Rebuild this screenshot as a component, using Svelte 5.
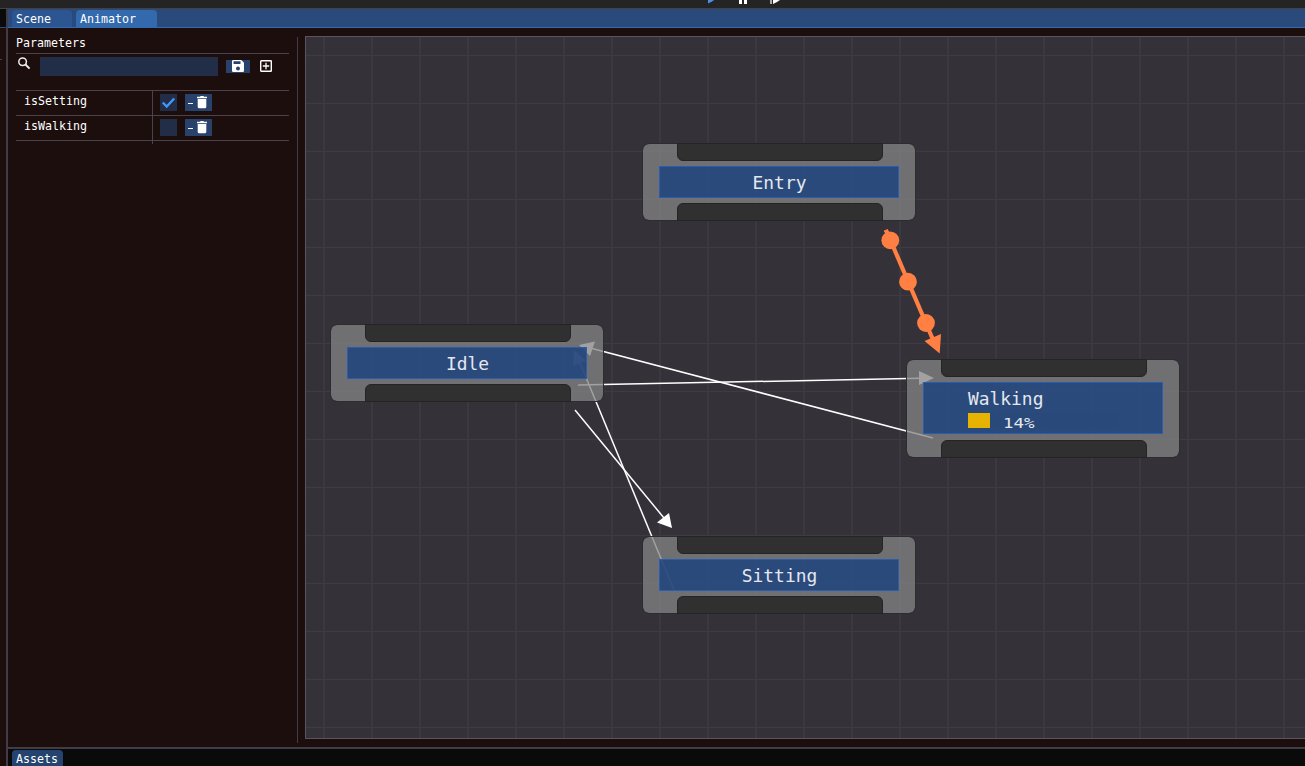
<script>
  const params = [
    { name: 'isSetting', on: true },
    { name: 'isWalking', on: false }
  ];
  const nodes = [
    { title: 'Entry', x: 336, y: 106, h: 78 },
    { title: 'Idle', x: 24, y: 287, h: 78 },
    { title: 'Walking', x: 600, y: 322, h: 99, progress: 14 },
    { title: 'Sitting', x: 336, y: 499, h: 78 }
  ];
  const links = [
    { line: [933, 438, 592, 348.5], head: '579,345 595,341.5 590,356' },
    { line: [578, 385, 920, 378.3], head: '934,378 919,371 919,385' },
    { line: [575, 410, 664, 518], head: '672,528 657,522.5 669,513' },
    { line: [674, 590, 580, 363], head: '574,350 573,366 586,361' }
  ];
  const beads = [[890.3, 240.3], [908, 281.7], [926, 323]];
  const cols = Array.from({ length: 21 }, (_, i) => 324 + i * 48);
  const rows = Array.from({ length: 15 }, (_, i) => 55.5 + i * 48);
</script>

<div class="app">
  <div class="toolbar">
    <svg width="80" height="8" viewBox="0 0 80 8">
      <path d="M0 -8L9 -2L4 1.5L0 3.5Z" fill="#4a90ec" />
      <path d="M31 -8h3v12h-3zM36 -8h3v12h-3z" fill="#fff" />
      <path d="M62 -8h2v12h-2z" fill="#aaa" />
      <path d="M65 -8L75 -2L69 2L65 4Z" fill="#fff" />
    </svg>
  </div>
  <div class="workspace">
    <div class="edge"><div class="edge-top"></div><div class="edge-rule"></div></div>
    <div class="dock">
      <div class="tabs">
        <div class="tab scene">Scene</div>
        <div class="tab active">Animator</div>
      </div>
      <div class="panes">
        <div class="side">
          <div class="heading">Parameters</div>
          <div class="search">
            <svg class="glass" width="14" height="14" viewBox="0 0 14 14" fill="none" stroke="#eee">
              <circle cx="5.6" cy="4.7" r="3.8" stroke-width="1.5" />
              <path d="M8.2 7.3L12.6 11.6" stroke-width="1.9" />
            </svg>
            <div class="input"></div>
            <div class="save">
              <svg width="12" height="12" viewBox="0 0 12 12">
                <path fill-rule="evenodd" d="M1.3 0H9.3L12 2.7V10.7Q12 12 10.7 12H1.3Q0 12 0 10.7V1.3Q0 0 1.3 0ZM1.5 1.3V4H8.5V1.3ZM6 6.4A2 2 0 1 0 6 10.4A2 2 0 1 0 6 6.4Z" fill="#fff" />
              </svg>
            </div>
            <svg class="add" width="12" height="12" viewBox="0 0 12 12" fill="none" stroke="#fff">
              <rect x=".7" y=".7" width="10.6" height="10.6" rx=".6" stroke-width="1.4" />
              <path d="M6 2.8V9.2M2.8 6H9.2" stroke-width="1.3" />
            </svg>
          </div>
          <div class="table">
            {#each params as p}
              <div class="row">
                <div class="name">{p.name}</div>
                <div class="cell">
                  <div class="check">
                    {#if p.on}
                      <svg width="17" height="17" viewBox="0 0 17 17"><path d="M2.8 8.5L6.7 12.5L14.2 4.5" fill="none" stroke="#4296fa" stroke-width="2.4" /></svg>
                    {/if}
                  </div>
                  <div class="remove">
                    <span class="dash"></span>
                    <svg width="10" height="13" viewBox="0 0 10 13"><path d="M0 .8H3L3.6 0H6.4L7 .8H10V2.2H0ZM.7 3H9.3V11.1Q9.3 12.2 8.2 12.2H1.8Q.7 12.2 .7 11.1Z" fill="#fff" /></svg>
                  </div>
                </div>
              </div>
            {/each}
            <div class="stub"></div>
          </div>
        </div>
        <div class="canvas">
          <svg class="links" width="999" height="701" viewBox="306 37 999 701">
            {#each cols as x}<path d="M{x} 37V738" class="grid" />{/each}
            {#each rows as y}<path d="M306 {y}H1305" class="grid" />{/each}
            {#each links as l}
              <line x1={l.line[0]} y1={l.line[1]} x2={l.line[2]} y2={l.line[3]} stroke="#fff" stroke-width="1.5" />
              <polygon points={l.head} fill="#fff" />
            {/each}
            <path d="M886.5 231L934 342" stroke="#ff8042" stroke-width="4.2" />
            <polygon points="884,230.5 888,229 888,234 884,232" fill="#ff8042" />
            {#each beads as [cx, cy]}<circle {cx} {cy} r="8.9" fill="#ff8042" />{/each}
            <polygon points="939.7,353.5 924.5,341 941,334" fill="#ff8042" />
          </svg>
          {#each nodes as n}
            <div class="node" style="left:{n.x}px;top:{n.y}px;height:{n.h}px">
              <div class="slot upper"></div>
              <div class="panel" class:busy={n.progress}>
                <div class="title">{n.title}</div>
                {#if n.progress}
                  <div class="progress">
                    <div class="fill" style="width:{n.progress}%"></div>
                    <div class="percent">{n.progress}%</div>
                  </div>
                {/if}
              </div>
              <div class="slot lower"></div>
            </div>
          {/each}
        </div>
      </div>
      <div class="assets"><div class="tab bottom">Assets</div></div>
    </div>
  </div>
</div>

<style>
  :global(body) { margin: 0; overflow: hidden; background: #1c0e0d; }
  .app, .app * { box-sizing: border-box; }
  .app {
    width: 1305px; height: 766px; display: flex; flex-direction: column; overflow: hidden;
    background: #1c0e0d; color: #fff;
    font: 11.63px/13px "DejaVu Sans Mono", "Liberation Mono", monospace;
  }
  .app svg { display: block; flex: none; }
  .toolbar { height: 9px; background: #242424; border-bottom: 1px solid #444045; padding-left: 708px; flex: none; }
  .workspace { flex: 1; display: flex; min-height: 0; }
  .edge { width: 8px; border-right: 2px solid #423b48; flex: none; }
  .edge-top { height: 19px; background: #0a0a0a; border-bottom: 1px solid #294a7a; }
  .edge-rule { width: 2px; height: 1px; margin-top: 31px; background: #49434c; }
  .dock { flex: 1; min-width: 0; display: flex; flex-direction: column; }
  .tabs { height: 19px; flex: none; background: #294a7a; border-bottom: 1px solid #3369ad; display: flex; padding: 1px 0 0 4px; gap: 4px; }
  .tab { height: 17px; padding: 3px 0 0 4px; border-radius: 4px 4px 0 0; white-space: pre; }
  .scene { width: 60px; background: #2b5691; }
  .active { width: 81px; background: #3369ad; }
  .panes { height: 719px; flex: none; display: flex; padding-top: 8px; }
  .side { width: 290px; height: 706px; margin-top: 1px; border-right: 1px solid #423b48; padding: 0 8px; flex: none; }
  .heading { height: 17px; border-bottom: 1px solid #4a434d; }
  .search { height: 37px; display: flex; align-items: flex-start; padding-top: 3px; border-bottom: 1px solid #4a434d; }
  .glass { margin: 0 0 0 1px; }
  .input { width: 178px; height: 19px; margin-left: 9px; background: #222d48; }
  .save { width: 24px; height: 13px; margin: 3px 0 0 8px; background: #28426c; display: flex; justify-content: center; }
  .add { margin: 3px 0 0 10px; }
  .row { height: 25px; display: flex; border-bottom: 1px solid #4a434d; }
  .name { width: 137px; border-right: 1px solid #4a434d; padding: 4px 0 0 8px; }
  .cell { display: flex; padding: 3px 0 0 7px; gap: 8px; }
  .check { width: 17px; height: 17px; background: #222d48; }
  .remove { width: 27px; height: 17px; background: #28426c; display: flex; align-items: flex-start; padding: 2px 0 0 3px; gap: 4px; }
  .dash { width: 5px; height: 1px; margin-top: 7px; background: #fff; }
  .stub { width: 137px; height: 3px; border-right: 1px solid #4a434d; }
  .canvas { position: relative; width: 1000px; height: 703px; margin-left: 7px; background: #343138; border: 1px solid #5a5460; border-right: 0; }
  .grid { stroke: #3e3b42; stroke-width: 1.6; }
  .node {
    position: absolute; width: 274px; border: 1px solid #2d2c2e; border-radius: 7px;
    background: rgba(131, 131, 131, .76); background-clip: padding-box;
    display: flex; flex-direction: column; align-items: center; justify-content: space-between;
  }
  .slot { width: 206px; height: 18px; background: #303030; border: 1px solid #242424; flex: none; margin-left: 2px; }
  .upper { border-radius: 0 0 6px 6px; margin-top: -1px; }
  .lower { border-radius: 6px 6px 0 0; margin-bottom: -1px; }
  .panel {
    width: 240px; height: 32px; background: rgba(33, 69, 125, .87); border: 1px solid #285db0;
    display: flex; flex-direction: column; align-items: center; color: #e4e8ee; font-size: 17.9px; line-height: 20px;
  }
  .title { padding: 6px 0 0 1px; }
  .busy { height: 52px; margin-bottom: 1px; align-items: flex-start; padding-left: 44px; }
  .busy .title { padding-left: 0; }
  .progress { position: relative; width: 150px; height: 15px; margin-top: 4px; background: #28497a; }
  .fill { height: 15px; min-width: 22px; background: #e6b300; }
  .percent { position: absolute; left: 35px; top: 3px; font-size: 17.5px; line-height: 14px; transform: scaleY(.78); transform-origin: center; }
  .assets { flex: 1; background: #0a0a0a; border-top: 2px solid #423b48; padding: 1px 0 0 4px; }
  .bottom { width: 51px; height: 18px; background: #24436f; }
</style>
